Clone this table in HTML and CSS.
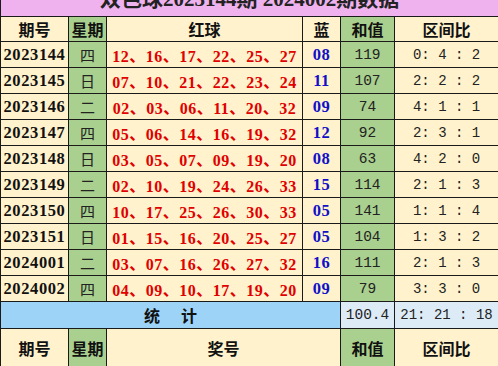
FILE: index.html
```html
<!DOCTYPE html>
<html lang="zh">
<head>
<meta charset="utf-8">
<title>双色球2023144期 2024002期数据</title>
<link rel="stylesheet" href="styles.css">
</head>
<body>
<table class="grid">
  <colgroup>
    <col class="c-qi"><col class="c-wk"><col class="c-red"><col class="c-blue"><col class="c-sum"><col class="c-ratio">
  </colgroup>
  <tr class="title">
    <td colspan="6"><span class="cn">双色球</span><span class="tn">2023144</span><span class="cn">期</span><span class="tn"> 2024002</span><span class="cn">期数据</span></td>
  </tr>
  <tr class="head">
    <th>期号</th><th class="wk">星期</th><th>红球</th><th>蓝</th><th class="sum">和值</th><th>区间比</th>
  </tr>
  <tr class="row"><td class="qi">2023144</td><td class="wk">四</td><td class="red">12、16、17、22、25、27</td><td class="blue">08</td><td class="sum">119</td><td class="ratio">0:  4 : 2</td></tr>
  <tr class="row"><td class="qi">2023145</td><td class="wk">日</td><td class="red">07、10、21、22、23、24</td><td class="blue">11</td><td class="sum">107</td><td class="ratio">2:  2 : 2</td></tr>
  <tr class="row"><td class="qi">2023146</td><td class="wk">二</td><td class="red">02、03、06、11、20、32</td><td class="blue">09</td><td class="sum">74</td><td class="ratio">4:  1 : 1</td></tr>
  <tr class="row"><td class="qi">2023147</td><td class="wk">四</td><td class="red">05、06、14、16、19、32</td><td class="blue">12</td><td class="sum">92</td><td class="ratio">2:  3 : 1</td></tr>
  <tr class="row"><td class="qi">2023148</td><td class="wk">日</td><td class="red">03、05、07、09、19、20</td><td class="blue">08</td><td class="sum">63</td><td class="ratio">4:  2 : 0</td></tr>
  <tr class="row"><td class="qi">2023149</td><td class="wk">二</td><td class="red">02、10、19、24、26、33</td><td class="blue">15</td><td class="sum">114</td><td class="ratio">2:  1 : 3</td></tr>
  <tr class="row"><td class="qi">2023150</td><td class="wk">四</td><td class="red">10、17、25、26、30、33</td><td class="blue">05</td><td class="sum">141</td><td class="ratio">1:  1 : 4</td></tr>
  <tr class="row"><td class="qi">2023151</td><td class="wk">日</td><td class="red">01、15、16、20、25、27</td><td class="blue">05</td><td class="sum">104</td><td class="ratio">1:  3 : 2</td></tr>
  <tr class="row"><td class="qi">2024001</td><td class="wk">二</td><td class="red">03、07、16、26、27、32</td><td class="blue">16</td><td class="sum">111</td><td class="ratio">2:  1 : 3</td></tr>
  <tr class="row"><td class="qi">2024002</td><td class="wk">四</td><td class="red">04、09、10、17、19、20</td><td class="blue">09</td><td class="sum">79</td><td class="ratio">3:  3 : 0</td></tr>
  <tr class="stat">
    <td colspan="4" class="stat-label">统<span class="gap"></span>计</td>
    <td class="stat-val">100.4</td>
    <td class="stat-val ratio">21: 21 : 18</td>
  </tr>
  <tr class="foot">
    <th>期号</th><th class="wk">星期</th><th colspan="2">奖号</th><th class="sum">和值</th><th>区间比</th>
  </tr>
</table>
</body>
</html>
```
FILE: styles.css
```css
html, body {
  margin: 0;
  padding: 0;
  background: #fff2cc;
}

.grid {
  width: 498px;
  table-layout: fixed;
  border-collapse: collapse;
  margin-top: -19px;
  background: #fff2cc;
  color: #111;
}

.c-qi { width: 68px; }
.c-wk { width: 38px; }
.c-red { width: 196px; }
.c-blue { width: 38px; }
.c-sum { width: 54px; }
.c-ratio { width: 104px; }

.grid td,
.grid th {
  border: 1px solid #1a1a1a;
  padding: 0;
  text-align: center;
  vertical-align: middle;
  white-space: nowrap;
  overflow: hidden;
}

.title td {
  height: 33px;
  background: #efb2ef;
  vertical-align: bottom;
  padding-bottom: 0;
  line-height: 30px;
  color: #222;
  font-weight: 700;
}
.title .cn {
  font-family: "Noto Sans CJK SC", sans-serif;
  font-size: 21px;
}
.title .tn {
  font-family: "Liberation Serif", serif;
  font-size: 21px;
  white-space: pre;
}

.head th,
.foot th {
  font-family: "Noto Sans CJK SC", sans-serif;
  font-size: 16px;
  font-weight: 700;
}
.head th { height: 24px; }
.foot th { height: 37px; }

.row td { height: 25px; }

.wk { background: #a9d08e; }
.sum { background: #a9d08e; }

.qi {
  font-family: "Liberation Serif", "Noto Sans CJK SC", serif;
  font-weight: 700;
  font-size: 16.5px;
  letter-spacing: 0.6px;
  color: #111;
}
.row .wk {
  font-family: "Noto Sans CJK SC", sans-serif;
  font-size: 15px;
  font-weight: 400;
  color: #222;
}
.red {
  font-family: "Liberation Serif", "Noto Sans CJK SC", serif;
  font-weight: 700;
  font-size: 16px;
  letter-spacing: 0.5px;
  color: #e00000;
}
.blue {
  font-family: "Liberation Serif", serif;
  font-weight: 700;
  font-size: 16.5px;
  letter-spacing: 0.5px;
  color: #1010c8;
}
.row .sum,
.stat-val {
  font-family: "Liberation Mono", monospace;
  font-size: 14.5px;
  color: #222;
}
.ratio {
  font-family: "Liberation Mono", monospace;
  font-size: 14px;
  white-space: pre;
  color: #222;
}

.stat td { height: 26px; }
.stat-label {
  background: #9dd3f7;
  font-family: "Noto Sans CJK SC", sans-serif;
  font-size: 16px;
  font-weight: 700;
}
.gap {
  display: inline-block;
  width: 21px;
}
.stat-val { background: #ddebf7; }
```
